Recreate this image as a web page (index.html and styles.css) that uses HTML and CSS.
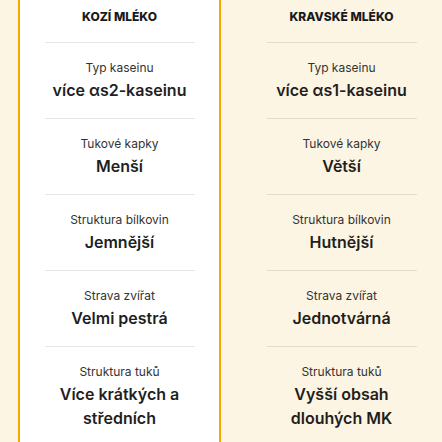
FILE: index.html
```html
<!DOCTYPE html>
<html lang="cs">
<head>
<meta charset="utf-8">
<link rel="stylesheet" href="styles.css">
</head>
<body>
<div class="table">
  <div class="col col-prev"></div>
  <div class="col col-goat">
    <div class="head">KOZÍ MLÉKO</div>
    <div class="row"><div class="label">Typ kaseinu</div><div class="value">více αs2-kaseinu</div></div>
    <div class="row"><div class="label">Tukové kapky</div><div class="value">Menší</div></div>
    <div class="row"><div class="label">Struktura bílkovin</div><div class="value">Jemnější</div></div>
    <div class="row"><div class="label">Strava zvířat</div><div class="value">Velmi pestrá</div></div>
    <div class="row"><div class="label">Struktura tuků</div><div class="value">Více krátkých a středních</div></div>
  </div>
  <div class="col col-cow">
    <div class="head">KRAVSKÉ MLÉKO</div>
    <div class="row"><div class="label">Typ kaseinu</div><div class="value">více αs1-kaseinu</div></div>
    <div class="row"><div class="label">Tukové kapky</div><div class="value">Větší</div></div>
    <div class="row"><div class="label">Struktura bílkovin</div><div class="value">Hutnější</div></div>
    <div class="row"><div class="label">Strava zvířat</div><div class="value">Jednotvárná</div></div>
    <div class="row"><div class="label">Struktura tuků</div><div class="value">Vyšší obsah dlouhých MK</div></div>
  </div>
</div>
</body>
</html>
```
FILE: styles.css
```css
html, body {
  margin: 0;
  padding: 0;
  background: #fdf5e3;
  overflow: hidden;
}
body {
  font-family: Inter, "Noto Sans", sans-serif;
  color: #1f1f1f;
}
.table {
  display: flex;
  align-items: stretch;
  height: 442px;
  overflow: hidden;
}
.col {
  flex: none;
  display: flex;
  flex-direction: column;
  align-items: center;
}
.col-prev {
  width: 18px;
}
.col-goat {
  width: 199px;
  background: #ffffff;
  border-left: 2px solid #f7a800;
  border-right: 2px solid #f7a800;
}
.col-cow {
  width: 241px;
}
.head {
  flex: none;
  width: 160px;
  box-sizing: border-box;
  padding-top: 8px;
  height: 42px;
  font-size: 12px;
  line-height: 17px;
  font-weight: 800;
  text-align: center;
  color: #1a1a1a;
}
.row {
  flex: none;
  width: 150px;
  border-top: 1px solid rgba(0, 0, 0, 0.1);
  padding: 17px 0 16px;
  text-align: center;
}
.label {
  font-size: 12px;
  line-height: 16px;
  color: #333333;
  margin-bottom: 2px;
}
.value {
  font-size: 16px;
  line-height: 24px;
  font-weight: 600;
  color: #1f1f1f;
}
```
